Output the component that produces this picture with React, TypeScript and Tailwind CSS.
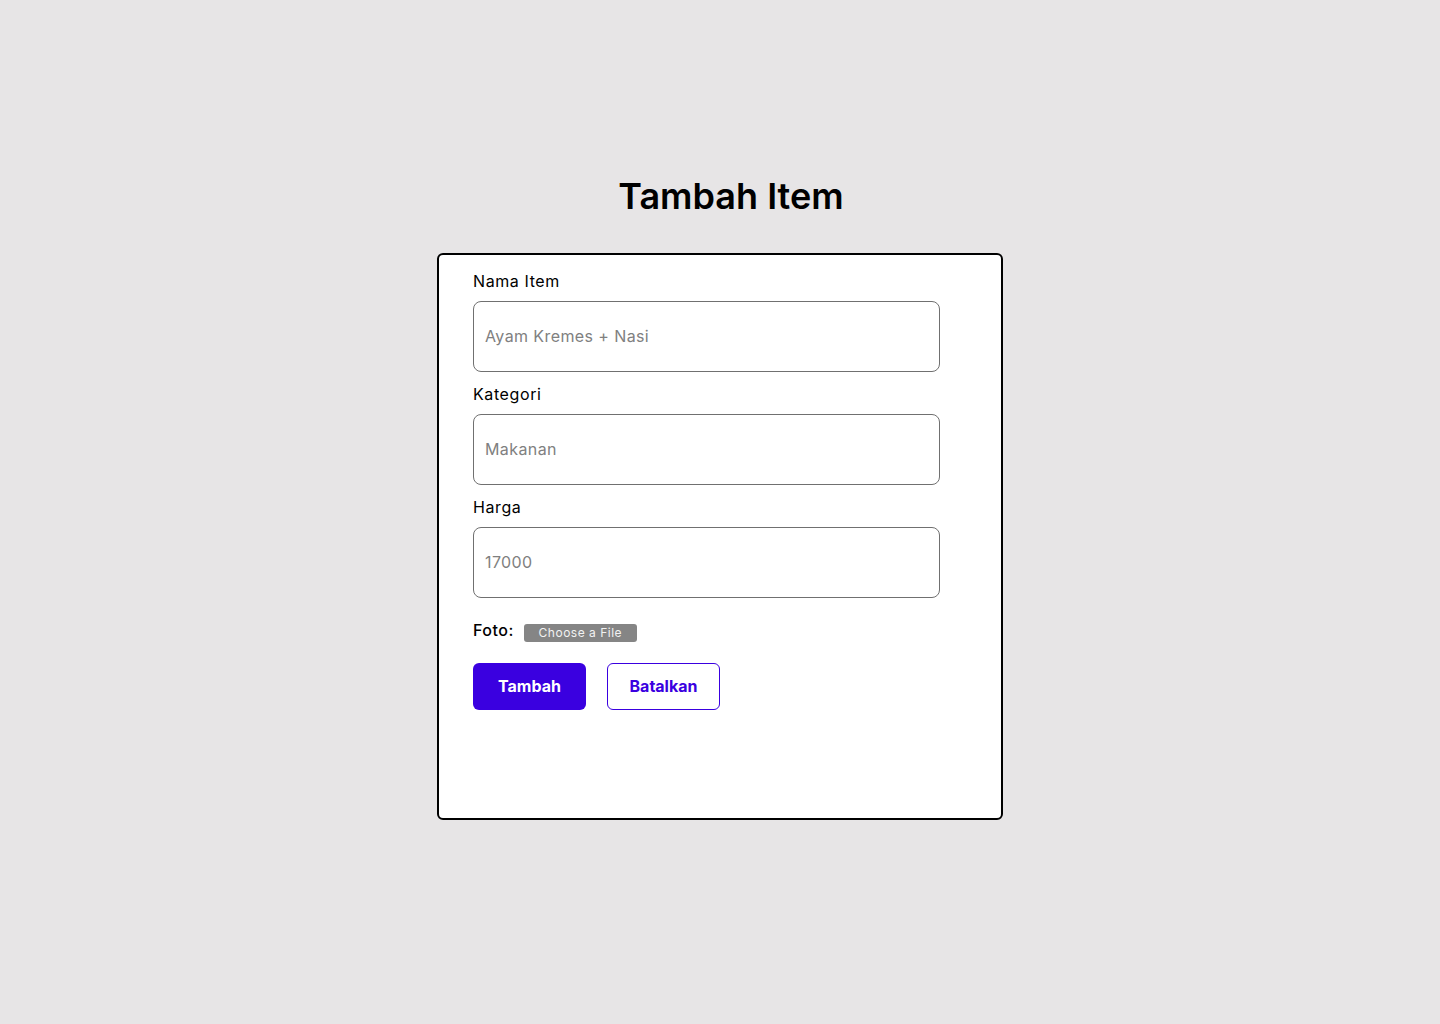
export default function App() {
  const fields = [
    { label: "Nama Item", placeholder: "Ayam Kremes + Nasi" },
    { label: "Kategori", placeholder: "Makanan" },
    { label: "Harga", placeholder: "17000" },
  ];
  return (
    <div className="flex min-h-[1024px] w-full flex-col items-center bg-[#e7e5e6] font-['Inter',sans-serif]">
      <h1 className="mt-[174px] pl-[22px] text-[36px] font-semibold leading-[44px] text-black">
        Tambah Item
      </h1>
      <div className="mt-[35px] h-[567px] w-[566px] rounded-[6px] border-2 border-black bg-white pl-[34px] pt-[16px]">
        {fields.map((f, i) => (
          <div key={f.label} className={i === 0 ? "" : "mt-[12px]"}>
            <label className="block text-[16px] leading-[20px] tracking-[0.6px] text-black">{f.label}</label>
            <input
              placeholder={f.placeholder}
              className="mt-[10px] block h-[71px] w-[467px] rounded-[8px] border border-[#707070] px-[11px] pb-[2px] text-[16px] tracking-[0.4px] text-black outline-none placeholder:text-[#808080]"
            />
          </div>
        ))}
        <div className="mt-[22px] flex items-start gap-[10px]">
          <span className="text-[16px] font-medium leading-[20px] tracking-[0.5px] text-black">Foto:</span>
          <label className="mt-[4px] flex h-[18px] w-[113px] cursor-pointer items-center justify-center rounded-[3px] bg-[#858585] text-[12px] tracking-[0.5px] text-[#f2f2f2]">
            Choose a File
            <input type="file" className="hidden" />
          </label>
        </div>
        <div className="mt-[21px] flex gap-[21px]">
          <button className="h-[47px] w-[113px] rounded-[6px] bg-[#3a00e0] pb-[2px] text-[16px] font-bold text-white">
            Tambah
          </button>
          <button className="h-[47px] w-[113px] rounded-[6px] border border-[#3a00e0] bg-white pb-[2px] text-[16px] font-bold text-[#3a00e0]">
            Batalkan
          </button>
        </div>
      </div>
    </div>
  );
}
